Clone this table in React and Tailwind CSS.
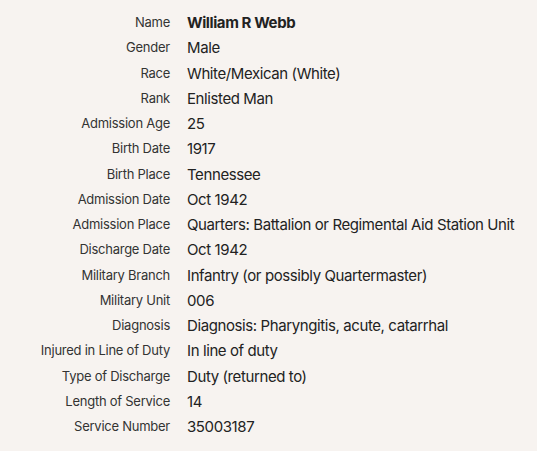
const rows = [
  ["Name", "William R Webb"],
  ["Gender", "Male"],
  ["Race", "White/Mexican (White)"],
  ["Rank", "Enlisted Man"],
  ["Admission Age", "25"],
  ["Birth Date", "1917"],
  ["Birth Place", "Tennessee"],
  ["Admission Date", "Oct 1942"],
  ["Admission Place", "Quarters: Battalion or Regimental Aid Station Unit"],
  ["Discharge Date", "Oct 1942"],
  ["Military Branch", "Infantry (or possibly Quartermaster)"],
  ["Military Unit", "006"],
  ["Diagnosis", "Diagnosis: Pharyngitis, acute, catarrhal"],
  ["Injured in Line of Duty", "In line of duty"],
  ["Type of Discharge", "Duty (returned to)"],
  ["Length of Service", "14"],
  ["Service Number", "35003187"],
];

export default function App() {
  return (
    <div className="min-h-screen bg-[#f7f3f0] pt-[10px] font-['Inter',sans-serif]">
      <dl className="grid grid-cols-[170px_1fr] gap-x-[17px]">
        {rows.map(([label, value], i) => (
          <div key={label} className="contents">
            <dt className="text-right text-[13px] leading-[25.25px] tracking-[-0.25px] text-[#333]">
              {label}
            </dt>
            <dd
              className={
                "text-[15px] leading-[25.25px] text-[#222] tracking-[-0.4px] " +
                (i === 0 ? "font-bold" : "")
              }
            >
              {value}
            </dd>
          </div>
        ))}
      </dl>
    </div>
  );
}
